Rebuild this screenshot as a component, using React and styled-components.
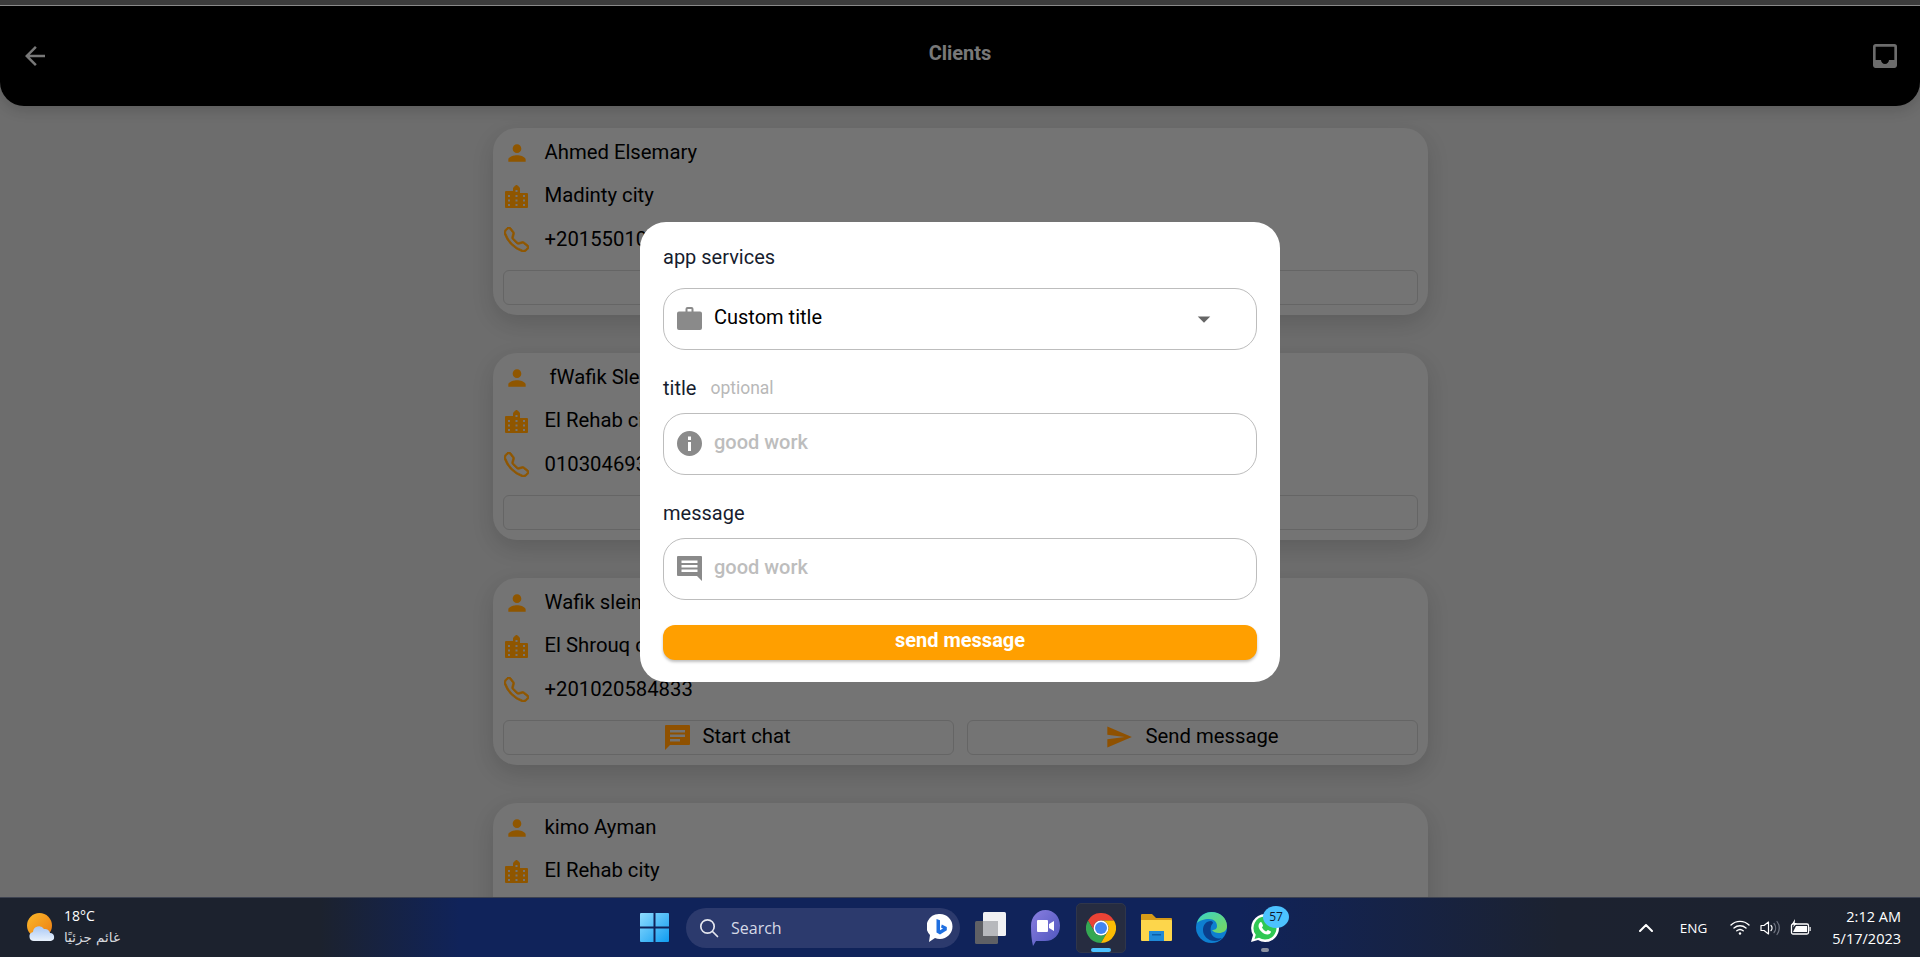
import React from 'react';
import styled, { createGlobalStyle } from 'styled-components';
import { MdArrowBack, MdArrowDropDown, MdInbox, MdPerson, MdSend } from 'react-icons/md';
import { BsTelephone } from 'react-icons/bs';

const GlobalStyle = createGlobalStyle`
  html, body { margin: 0; padding: 0; height: 100%; overflow: hidden; }
  body { font-family: Roboto, "Liberation Sans", sans-serif; background: #000; }
  * { box-sizing: border-box; }
`;

const Screen = styled.div`
  width: 1920px;
  height: 957px;
  display: flex;
  flex-direction: column;
  overflow: hidden;
`;

const TopStrip = styled.div`
  height: 6px;
  flex: none;
  background: #3c3c3c;
  border-bottom: 1px solid #8a8a8a;
`;

const Main = styled.div`
  position: relative;
  flex: 1;
  min-height: 0;
  overflow: hidden;
  background: #c2c2c2;
`;

const Header = styled.header`
  height: 100px;
  background: #000;
  border-radius: 0 0 24px 24px;
  display: grid;
  grid-template-columns: 1fr auto 1fr;
  align-items: center;
  padding: 0 19px 0 20px;
  box-shadow: 0 4px 14px rgba(0, 0, 0, 0.16);
  position: relative;
`;

const BackIcon = styled(MdArrowBack)`
  font-size: 30px;
  color: #d6d6d6;
`;

const Title = styled.h1`
  margin: 0 1px 6px 0;
  font-size: 20px;
  font-weight: 700;
  color: #d6d6d6;
`;

const InboxIcon = styled(MdInbox)`
  justify-self: end;
  font-size: 32px;
  color: #c0c0c0;
`;

const List = styled.div`
  width: 935px;
  margin: 22px auto 0;
  display: flex;
  flex-direction: column;
  gap: 38px;
`;

const Card = styled.section`
  height: 187px;
  flex: none;
  background: #cfcfcf;
  border-radius: 24px;
  padding: 3px 10px 9px;
  box-shadow: 0 8px 22px rgba(0, 0, 0, 0.14);
`;

const Row = styled.div`
  height: 43.5px;
  display: flex;
  align-items: center;
  gap: 15px;
  padding-left: 1px;
`;

const RowIcon = styled.span`
  width: 26px;
  height: 26px;
  flex: none;
  display: flex;
  align-items: center;
  justify-content: center;
  color: #ff9a00;
`;

const RowText = styled.span`
  font-size: 20.3px;
  color: #000;
  margin-bottom: 2.5px;
  white-space: pre;
`;

const Actions = styled.div`
  display: grid;
  grid-template-columns: 1fr 1fr;
  gap: 13px;
  margin-top: 8px;
`;

const ActionButton = styled.button`
  height: 35px;
  background: transparent;
  border: 1.5px solid #b4b4b4;
  border-radius: 6px;
  display: flex;
  align-items: center;
  justify-content: center;
  gap: 12px;
  font: 400 20.3px Roboto, sans-serif;
  color: #000;
  padding: 0 0 3px;
`;

const ActionIcon = styled.span`
  display: flex;
  margin-top: 3px;
  color: #ff9000;
`;

const Overlay = styled.div`
  position: absolute;
  inset: 0;
  background: rgba(0, 0, 0, 0.44);
  display: flex;
  align-items: center;
  justify-content: center;
`;

const Modal = styled.div`
  width: 640px;
  height: 460px;
  background: #fff;
  border-radius: 26px;
  padding: 23px;
  display: flex;
  flex-direction: column;
`;

const Label = styled.div`
  height: 24px;
  margin-bottom: ${(props) => props.$gap || 13}px;
  display: flex;
  align-items: center;
  gap: 14px;
  font-size: 20px;
  color: #171d2e;
`;

const Hint = styled.span`
  font-size: 17.5px;
  color: #b8b8b8;
`;

const Field = styled.div`
  height: 62px;
  flex: none;
  margin-bottom: 26px;
  border: 1.5px solid #bdbdbd;
  border-radius: 22px;
  display: flex;
  align-items: center;
  padding: 0 12px;
`;

const FieldIcon = styled.span`
  width: 26px;
  flex: none;
  display: flex;
  justify-content: center;
  color: #8a8a8a;
  margin-right: 12px;
`;

const FieldText = styled.span`
  flex: 1;
  font-size: 20px;
  margin-bottom: 4px;
  color: ${(props) => (props.$placeholder ? '#bdbdbd' : '#000')};
  font-weight: ${(props) => (props.$placeholder ? 500 : 400)};
`;

const Caret = styled(MdArrowDropDown)`
  font-size: 30px;
  color: #666;
  margin-right: 25px;
`;

const SubmitButton = styled.button`
  height: 35px;
  margin-top: -1px;
  flex: none;
  border: 0;
  border-radius: 12px;
  background: #ff9f00;
  color: #fff;
  font: 700 20px Roboto, sans-serif;
  padding: 0 0 4px;
  box-shadow: 0 2px 3px rgba(0, 0, 0, 0.25);
`;

const Taskbar = styled.footer`
  height: 60px;
  flex: none;
  border-top: 1px solid #3d4250;
  background: linear-gradient(90deg, #1c222e 0, #1c222e 320px, #10235a 460px, #10235a 1240px, #1c2230 1560px, #1c222e 100%);
  display: grid;
  grid-template-columns: 640px 650px 1fr;
  align-items: center;
  color: #fff;
  font-family: "Open Sans", "Noto Sans", "DejaVu Sans", sans-serif;
`;

const Weather = styled.div`
  display: flex;
  align-items: center;
  gap: 9px;
  padding-left: 27px;
`;

const TwoLines = styled.div`
  display: flex;
  flex-direction: column;
  gap: 5px;
  margin-top: -2px;
  font-size: 14px;
  line-height: 17px;
`;

const Muted = styled.span`
  color: #d7d9de;
  font-family: "DejaVu Sans", sans-serif;
  font-size: 13.5px;
`;

const Center = styled.div`
  height: 50px;
  display: flex;
  align-items: center;
  & > svg { flex: none; }
`;

const SearchPill = styled.div`
  width: 274px;
  height: 40px;
  margin-left: 17px;
  margin-right: 5px;
  flex: none;
  display: flex;
  align-items: center;
  padding: 0 7px 0 13px;
  border-radius: 20px;
  background: #2c3a6d;
  color: #d5d9e6;
  font-size: 16px;
`;

const SearchLabel = styled.span`
  flex: 1;
  margin-left: 12px;
`;

const TaskIcon = styled.div`
  position: relative;
  width: 50px;
  height: 50px;
  margin-right: ${(props) => props.$gap}px;
  flex: none;
  display: flex;
  align-items: center;
  justify-content: center;
  border-radius: 5px;
  background: ${(props) => (props.$active ? '#262c40' : 'transparent')};
  border: 1px solid ${(props) => (props.$active ? '#30364a' : 'transparent')};
`;

const RunDot = styled.span`
  position: absolute;
  bottom: 0;
  left: 50%;
  transform: translateX(-50%);
  width: ${(props) => (props.$active ? 20 : 8)}px;
  height: 4px;
  border-radius: 2px;
  background: ${(props) => (props.$active ? '#4cc2ff' : '#8b90a0')};
`;

const Badge = styled.span`
  position: absolute;
  top: 2px;
  right: 0;
  width: 26px;
  height: 22px;
  border-radius: 50%;
  background: #4cc2ff;
  color: #10182c;
  font-size: 12px;
  line-height: 22px;
  text-align: center;
`;

const Tray = styled.div`
  justify-self: end;
  display: flex;
  align-items: center;
  padding-right: 19px;
`;

const TrayLang = styled.span`
  font-size: 13.5px;
  margin: 0 23px 0 27px;
`;

const TrayIcons = styled.div`
  display: flex;
  align-items: center;
  gap: 10px;
  margin-right: 21px;
`;

const Clock = styled.div`
  display: flex;
  flex-direction: column;
  align-items: flex-end;
  gap: 5px;
  font-size: 14.5px;
  line-height: 17px;
`;

const BuildingIcon = () => (
  <svg width="23" height="23" viewBox="0 0 23 23" fill="currentColor">
    <path fillRule="evenodd" d="M11.500 0c1 0 3.500 2.500 3.500 3.500V8h7a1 1 0 0 1 1 1v13a1 1 0 0 1-1 1H1a1 1 0 0 1-1-1V7a1 1 0 0 1 1-1h7V3.500C8 2.500 10.500 0 11.500 0ZM10.500 5v2h2V5ZM3 10v2h2v-2Zm7.500 0v2h2v-2Zm7.500 0v2h2v-2ZM3 14.500v2h2v-2Zm7.500 0v2h2v-2Zm7.500 0v2h2v-2ZM3 19v2h2v-2Zm7.500 0v2h2v-2Zm7.500 0v2h2v-2Z" />
  </svg>
);

const BriefcaseIcon = () => (
  <svg width="25" height="23" viewBox="0 0 25 23" fill="currentColor">
    <path fillRule="evenodd" d="M8.500 4.500V2a2 2 0 0 1 2-2h4a2 2 0 0 1 2 2v2.500H23a2 2 0 0 1 2 2V21a2 2 0 0 1-2 2H2a2 2 0 0 1-2-2V6.500a2 2 0 0 1 2-2ZM10.500 2v2.500h4V2Z" />
  </svg>
);

const InfoIcon = () => (
  <svg width="25" height="25" viewBox="0 0 25 25" fill="currentColor">
    <path fillRule="evenodd" d="M12.500 0a12.500 12.500 0 1 1 0 25 12.500 12.500 0 0 1 0-25ZM11 5.500V9h3V5.500Zm0 5.500v9h3v-9Z" />
  </svg>
);

const ChatBubble = () => (
  <svg width="25" height="25" viewBox="0 0 25 25" fill="currentColor">
    <path fillRule="evenodd" d="M1 0h23a1 1 0 0 1 1 1v18a1 1 0 0 1-1 1H5l-5 5V1a1 1 0 0 1 1-1Zm4 5v2.500h15V5Zm0 4.500V12h15V9.500ZM5 14v2.500h10V14Z" />
  </svg>
);

const MessageBubble = () => (
  <svg width="25" height="25" viewBox="0 0 25 25" fill="currentColor">
    <path fillRule="evenodd" d="M1 0h23a1 1 0 0 1 1 1v24l-5-5H1a1 1 0 0 1-1-1V1a1 1 0 0 1 1-1Zm3.500 4.500V7h16V4.500Zm0 4.500v2.500h16V9Zm0 4.500V16h16v-2.500Z" />
  </svg>
);

const WeatherIcon = () => (
  <svg width="28" height="29" viewBox="0 0 28 29">
    <defs>
      <linearGradient id="sun" x1="0" y1="0" x2="1" y2="1">
        <stop offset="0" stopColor="#fbb92a" />
        <stop offset="1" stopColor="#ec7b12" />
      </linearGradient>
      <linearGradient id="cloud" x1="0" y1="0" x2="0" y2="1">
        <stop offset="0" stopColor="#a9c8f5" />
        <stop offset="1" stopColor="#e8f1fc" />
      </linearGradient>
    </defs>
    <circle cx="12.500" cy="12.500" r="12.500" fill="url(#sun)" />
    <path d="M7 28a4.500 4.500 0 0 1-1-8.900 6 6 0 0 1 11-3 5 5 0 0 1 6 4 4 4 0 0 1 1 7.900Z" fill="url(#cloud)" />
  </svg>
);

const WindowsLogo = () => (
  <svg width="29" height="29" viewBox="0 0 29 29">
    <defs>
      <linearGradient id="win" x1="0" y1="0" x2="1" y2="1">
        <stop offset="0" stopColor="#8fdcff" />
        <stop offset="1" stopColor="#0f9cf0" />
      </linearGradient>
    </defs>
    <path d="M1 0h12.500v13.500H0V1a1 1 0 0 1 1-1Zm14.500 0H28a1 1 0 0 1 1 1v12.500H15.500ZM0 15.500h13.500V29H1a1 1 0 0 1-1-1Zm15.500 0H29V28a1 1 0 0 1-1 1H15.500Z" fill="url(#win)" />
  </svg>
);

const SearchGlyph = () => (
  <svg width="20" height="20" viewBox="0 0 20 20" fill="none" stroke="#e4e6ee" strokeWidth="1.700" strokeLinecap="round">
    <circle cx="8.500" cy="8.500" r="6.700" />
    <path d="m13.500 13.500 5 5" />
  </svg>
);

const BingIcon = () => (
  <svg width="26" height="30" viewBox="0 0 26 30">
    <path d="M13 1a12.500 12.500 0 0 1 0 25 12 12 0 0 1-5-1l-6 4 1-7A12.500 12.500 0 0 1 13 1Z" fill="#fff" />
    <path d="M9.500 6 13 7.300v10l3-1.700-2-1 .8-3 5 2.400v3.300L13 21.500l-3.500-2Z" fill="#1f6fe0" />
  </svg>
);

const TaskViewIcon = () => (
  <svg width="31" height="32" viewBox="0 0 31 32">
    <rect x="8" y="0" width="23" height="24" rx="1.500" fill="#f1f1f3" />
    <rect x="0" y="9" width="23" height="23" rx="1.500" fill="#5f6065" />
    <rect x="8" y="9" width="15" height="15" fill="#b7b8bc" />
  </svg>
);

const MeetIcon = () => (
  <svg width="29" height="36" viewBox="0 0 29 36">
    <defs>
      <linearGradient id="meet" x1="0" y1="0" x2="1" y2="1">
        <stop offset="0" stopColor="#8a7fe0" />
        <stop offset="1" stopColor="#4b53bc" />
      </linearGradient>
    </defs>
    <path d="M14.500 0C23 0 29 7 29 15.500 29 25 23 31 14 31H5l-3 5c-1.500-6-2-13-2-20C0 7 6 0 14.500 0Z" fill="url(#meet)" />
    <path d="M7 10h9a1 1 0 0 1 1 1v10a1 1 0 0 1-1 1H7a1 1 0 0 1-1-1V11a1 1 0 0 1 1-1Zm11 4 5-3v10l-5-3Z" fill="#fff" />
  </svg>
);

const ChromeIcon = () => (
  <svg width="30" height="30" viewBox="-15 -15 30 30">
    <path d="M-13 -7.500A15 15 0 0 1 13 -7.500H0A7.500 7.500 0 0 0 -6.500 3.750Z" fill="#ea4335" />
    <path d="M-13 -7.500L-6.500 3.750A7.500 7.500 0 0 0 6.500 3.750L0 15A15 15 0 0 1 -13 -7.500Z" fill="#34a853" />
    <path d="M13 -7.500A15 15 0 0 1 0 15L6.500 3.750A7.500 7.500 0 0 0 0 -7.500Z" fill="#fbbc04" />
    <circle r="7.500" fill="#fff" />
    <circle r="6" fill="#4285f4" />
  </svg>
);

const FolderIcon = () => (
  <svg width="31" height="27" viewBox="0 0 31 27">
    <path d="M1 0h10l4 4h15a1 1 0 0 1 1 1v3H0V1a1 1 0 0 1 1-1Z" fill="#d69a17" />
    <path d="M0 6h30a1 1 0 0 1 1 1v19a1 1 0 0 1-1 1H1a1 1 0 0 1-1-1Z" fill="#fdd64b" />
    <path d="M8 17h15v10H8Z" fill="#1f8ad8" />
    <path d="M11 20h9v1.500h-9Z" fill="#0b5ea8" />
  </svg>
);

const EdgeIcon = () => (
  <svg width="31" height="31" viewBox="0 0 31 31">
    <defs>
      <linearGradient id="edgeA" x1="0" y1="0" x2="1" y2="1">
        <stop offset="0" stopColor="#3bd4c5" />
        <stop offset="1" stopColor="#7ad65a" />
      </linearGradient>
    </defs>
    <circle cx="15.500" cy="15.500" r="15.500" fill="#0e7fd0" />
    <path d="M1 11C3 4 9 0 15.500 0 24 0 31 6 31 14c0 5-4 7-8 7-3 0-6-1-7-3 3 0 5-1 5-4 0-4-3-7-8-7-5 0-10 2-12 4Z" fill="url(#edgeA)" />
    <path d="M15 9c-5 0-8 4-8 9 0 6 5 11 12 11 3 0 5-1 7-3-4 1-8 0-10-3-2-4-2-9 1-12 0-1-1-2-2-2Z" fill="#0a3f8c" />
  </svg>
);

const WhatsAppIcon = () => (
  <svg width="30" height="30" viewBox="0 0 30 30">
    <path d="M15 1a14 14 0 0 1 0 28 14 14 0 0 1-7-2l-7 2 2-7A14 14 0 0 1 15 1Z" fill="#fff" />
    <path d="M15 3.500a11.500 11.500 0 0 1 0 23 11.500 11.500 0 0 1-6-1.700l-4.500 1.300 1.300-4.300A11.500 11.500 0 0 1 15 3.500Z" fill="#2fc853" />
    <path d="M11 9c1 0 1.500 2.500 2 3.500 0 1-1 1.500-1 2 1 2 2.500 3 4 4 .7 0 1.200-1.500 2-1.500l3 1.500c0 2-2 3-3.500 3-4.500 0-9-5-9-8.500C8.500 11 10 9 11 9Z" fill="#fff" />
  </svg>
);

const ChevronUp = () => (
  <svg width="14" height="8" viewBox="0 0 14 8" fill="none" stroke="#fff" strokeWidth="2" strokeLinecap="round" strokeLinejoin="round">
    <path d="m1 7 6-6 6 6" />
  </svg>
);

const WifiIcon = () => (
  <svg width="20" height="15" viewBox="0 0 20 15" fill="none" stroke="#fff" strokeWidth="1.400" strokeLinecap="round">
    <path d="M1 5a13 13 0 0 1 18 0M4 8a9 9 0 0 1 12 0M6.800 10.800a5 5 0 0 1 6.400 0" />
    <circle cx="10" cy="13.500" r="1.200" fill="#fff" stroke="none" />
  </svg>
);

const VolumeIcon = () => (
  <svg width="20" height="16" viewBox="0 0 20 16" fill="none" strokeWidth="1.200" strokeLinecap="round" strokeLinejoin="round">
    <path d="M1 5.500h3L8.500 2v12L4 10.500H1Z" stroke="#fff" />
    <path d="M11 5.500a3.500 3.500 0 0 1 0 5" stroke="#fff" />
    <path d="M14 3.500a7 7 0 0 1 0 9M17 1.500a10.500 10.500 0 0 1 0 13" stroke="#6f7480" />
  </svg>
);

const BatteryIcon = () => (
  <svg width="21" height="17" viewBox="0 0 21 17" fill="none">
    <path d="M3 5h14a1.500 1.500 0 0 1 1.500 1.500v7A1.500 1.500 0 0 1 17 15H3a1.500 1.500 0 0 1-1.500-1.500v-7A1.500 1.500 0 0 1 3 5Z" stroke="#fff" strokeWidth="1.300" />
    <path d="M6 7h11v6H3Z" fill="#fff" />
    <path d="M19.500 8h1.200v4h-1.200Z" fill="#fff" />
    <path d="M5 0 2 5h2.200L3 8.500 7 4H4.700Z" fill="#fff" />
  </svg>
);

const clients = [
  { name: 'Ahmed Elsemary', city: 'Madinty city', phone: '+201550100000' },
  { name: ' fWafik Sleim', city: 'El Rehab city', phone: '01030469300' },
  { name: 'Wafik sleim', city: 'El Shrouq city', phone: '+201020584833' },
  { name: 'kimo Ayman', city: 'El Rehab city', phone: '+201000000000' },
];

const App = () => (
  <Screen>
    <GlobalStyle />
    <TopStrip />
    <Main>
      <Header>
        <BackIcon />
        <Title>Clients</Title>
        <InboxIcon />
      </Header>
      <List>
        {clients.map((client) => (
          <Card key={client.phone}>
            <Row>
              <RowIcon><MdPerson size={32} /></RowIcon>
              <RowText>{client.name}</RowText>
            </Row>
            <Row>
              <RowIcon><BuildingIcon /></RowIcon>
              <RowText>{client.city}</RowText>
            </Row>
            <Row>
              <RowIcon><BsTelephone size={25} stroke="currentColor" strokeWidth={0.5} /></RowIcon>
              <RowText>{client.phone}</RowText>
            </Row>
            <Actions>
              <ActionButton>
                <ActionIcon><ChatBubble /></ActionIcon>
                Start chat
              </ActionButton>
              <ActionButton>
                <ActionIcon><MdSend size={28} /></ActionIcon>
                Send message
              </ActionButton>
            </Actions>
          </Card>
        ))}
      </List>
      <Overlay>
        <Modal>
          <Label $gap={19}>app services</Label>
          <Field>
            <FieldIcon><BriefcaseIcon /></FieldIcon>
            <FieldText>Custom title</FieldText>
            <Caret />
          </Field>
          <Label>
            title
            <Hint>optional</Hint>
          </Label>
          <Field>
            <FieldIcon><InfoIcon /></FieldIcon>
            <FieldText $placeholder>good work</FieldText>
          </Field>
          <Label>message</Label>
          <Field>
            <FieldIcon><MessageBubble /></FieldIcon>
            <FieldText $placeholder>good work</FieldText>
          </Field>
          <SubmitButton>send message</SubmitButton>
        </Modal>
      </Overlay>
    </Main>
    <Taskbar>
      <Weather>
        <WeatherIcon />
        <TwoLines>
          <span>18°C</span>
          <Muted>غائم جزئيًا</Muted>
        </TwoLines>
      </Weather>
      <Center>
        <WindowsLogo />
        <SearchPill>
          <SearchGlyph />
          <SearchLabel>Search</SearchLabel>
          <BingIcon />
        </SearchPill>
        <TaskIcon $gap={5}><TaskViewIcon /></TaskIcon>
        <TaskIcon $gap={6}><MeetIcon /></TaskIcon>
        <TaskIcon $active $gap={5}><ChromeIcon /><RunDot $active /></TaskIcon>
        <TaskIcon $gap={5}><FolderIcon /></TaskIcon>
        <TaskIcon $gap={4}><EdgeIcon /></TaskIcon>
        <TaskIcon $gap={0}><WhatsAppIcon /><Badge>57</Badge><RunDot /></TaskIcon>
      </Center>
      <Tray>
        <ChevronUp />
        <TrayLang>ENG</TrayLang>
        <TrayIcons>
          <WifiIcon />
          <VolumeIcon />
          <BatteryIcon />
        </TrayIcons>
        <Clock>
          <span>2:12 AM</span>
          <span>5/17/2023</span>
        </Clock>
      </Tray>
    </Taskbar>
  </Screen>
);

export default App;
